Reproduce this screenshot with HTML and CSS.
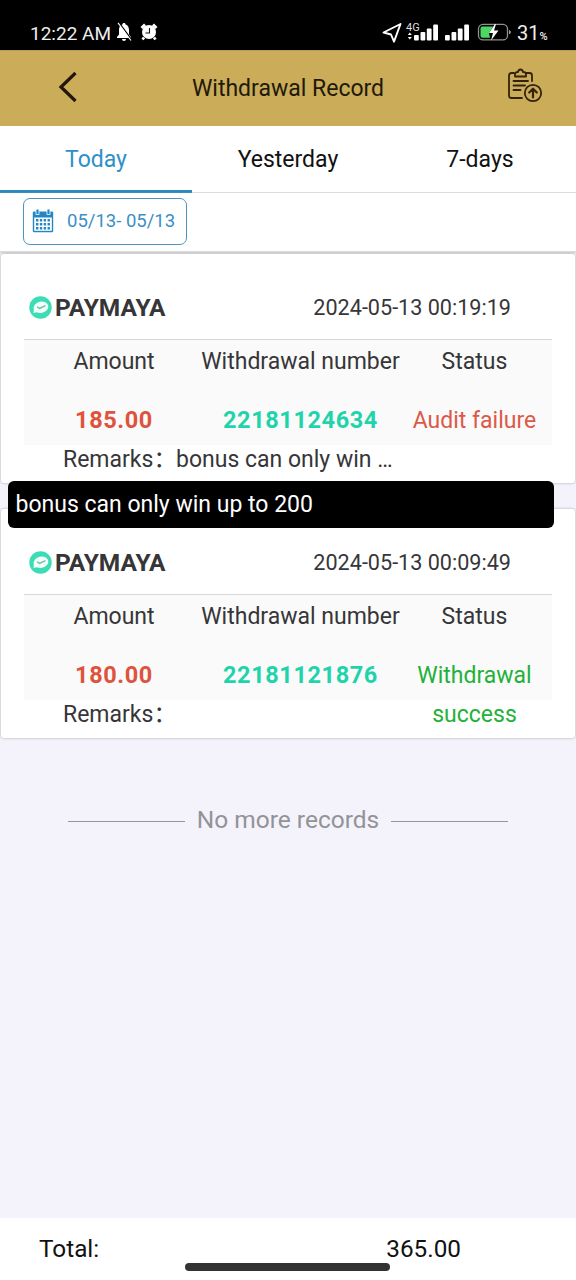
FILE: index.html
```html
<!DOCTYPE html>
<html lang="en">
<head>
<meta charset="utf-8">
<title>Withdrawal Record</title>
<link rel="stylesheet" href="styles.css">
</head>
<body>
<div class="statusbar">
  <div class="status-left">
    <span class="clock">12:22 AM</span>
    <svg class="bell" width="17" height="20" viewBox="0 0 17 20"><path d="M8 1c-1 0-1.600.6-1.600 1.500C3.800 3.200 3 5.500 3 8v4.500L1 15v1h14v-1l-2-2.500V8c0-2.500-1-4.800-3.400-5.500C9.600 1.600 9 1 8 1zM6 17a2 2 0 0 0 4 0z" fill="#fff"/><path d="M3 .8L16 18.500" stroke="#000" stroke-width="1.500"/><path d="M2 .8L15 18.500" stroke="#fff" stroke-width="1.100"/></svg>
    <svg class="alarm" width="18" height="18" viewBox="0 0 18 18"><path d="M1.500 5L5 1.500M16.500 5L13 1.500M4 14.500L2.500 16.500M14 14.500L15.500 16.500" stroke="#fff" stroke-width="2.800"/><circle cx="9" cy="9" r="7" fill="#fff"/><path d="M9.500 5v5H5.500" fill="none" stroke="#111" stroke-width="1.100"/></svg>
  </div>
  <div class="status-right">
    <svg width="132" height="24" viewBox="0 0 132 24">
      <path d="M18.500 3L1.500 11.500l7.500 2 3 7.200z" fill="none" stroke="#fff" stroke-width="1.900" stroke-linejoin="round"/>
      <path d="M25.800 14l2-2.500 2 2.500zM25.800 16l2 2.500 2-2.500z" fill="#fff"/>
      <g fill="#fff"><rect x="32" y="14" width="4.800" height="5.500" rx="1"/><rect x="38.500" y="11" width="4.800" height="8.500" rx="1"/><rect x="44.800" y="7.500" width="4.800" height="12" rx="1"/><rect x="51.200" y="3.500" width="4.800" height="16" rx="1"/>
      <rect x="63" y="14" width="4.800" height="5.500" rx="1"/><rect x="69.500" y="11" width="4.800" height="8.500" rx="1"/><rect x="75.800" y="7.500" width="4.800" height="12" rx="1"/><rect x="82.200" y="3.500" width="4.800" height="16" rx="1"/></g>
      <rect x="96.500" y="3.300" width="29" height="15.600" rx="4.500" fill="none" stroke="#8b938c" stroke-width="1.300"/>
      <path d="M100.500 5.500h10.500l-4 6.500 1 4.700h-7.500q-2 0-2-2v-7.200q0-2 2-2z" fill="#4bd763"/>
      <path d="M113 3l-6 9h4l-2 7.500 7.500-10h-4.500l2-6.500z" fill="#fff"/>
      <path d="M127.500 9.500q1.800 1.500 0 3.500z" fill="#999" stroke="#999"/>
      <text x="24" y="9.500" class="network">4G</text>
    </svg>
    <span class="battery">31<small>%</small></span>
  </div>
</div>

<header class="titlebar">
  <svg class="back" width="24" height="34" viewBox="0 0 24 34"><path d="M20.500 3L6 17 20.500 31" fill="none" stroke="#21170b" stroke-width="3.200"/></svg>
  <h1>Withdrawal Record</h1>
  <svg class="report" width="36" height="36" viewBox="0 0 36 36" fill="none" stroke="#33230c" stroke-width="1.800" stroke-linecap="round" stroke-linejoin="round">
    <path d="M7 5H4.500Q2 5 2 7.500v20Q2 30 4.500 30H15M19 5h3.500Q25 5 25 7.500V13"/>
    <path d="M8 8.500V6q0-2 3-2 .5-2.500 2.500-2.500T16 4q3 0 3 2v2.500z"/>
    <path d="M6.500 13H21M6.500 17.500H18M6.500 22H13.500"/>
    <circle cx="26" cy="25" r="8.200"/><path d="M26 29.500V21M22.200 24.500L26 20.700l3.800 3.800" stroke-width="2.200"/>
  </svg>
</header>

<nav class="tabs">
  <div class="tab active">Today</div>
  <div class="tab">Yesterday</div>
  <div class="tab">7-days</div>
</nav>

<div class="filter">
  <div class="range">
    <svg width="22" height="24" viewBox="0 0 22 24"><path d="M2 2.500h18q1.200 0 1.200 1.200V22q0 1.200-1.200 1.200H2Q.8 23.200.8 22V3.700Q.8 2.500 2 2.500z" fill="#2486c5"/><path d="M2.200 8.500h17.600v13.300H2.200z" fill="#fff"/><path d="M5.500.8v5M16.500.8v5" stroke="#fff" stroke-width="3.800"/><path d="M5.500.5v4.500M16.500.5v4.500" stroke="#2486c5" stroke-width="2.200"/><path d="M4 11.200h14M4 15.200h14M4 19.200h14" stroke="#2486c5" stroke-width="2.400" stroke-dasharray="2.400 1.450"/></svg>
    <span>05/13- 05/13</span>
  </div>
</div>

<main class="records">
  <section class="card">
    <div class="card-head">
      <svg class="logo" width="23" height="23" viewBox="0 0 23 23"><circle cx="11.500" cy="11.500" r="11.200" fill="#3cddb5"/><ellipse cx="12" cy="11.200" rx="7.400" ry="5.600" transform="rotate(-12 12 11.200)" fill="#f3fffb"/><path d="M5 12l-.5 5 4-1z" fill="#f3fffb"/><path d="M8 10.800l2.500 1.600 6-2.800" fill="none" stroke="#6abfa6" stroke-width="1.300"/></svg>
      <strong>PAYMAYA</strong>
      <time>2024-05-13 00:19:19</time>
    </div>
    <div class="details">
      <div class="label">Amount</div><div class="label">Withdrawal number</div><div class="label">Status</div>
      <div class="value amount">185.00</div><div class="value number">22181124634</div><div class="value failed">Audit failure</div>
    </div>
    <div class="remarks"><span class="remark-label">Remarks<b class="colon">：</b></span><span>bonus can only win …</span></div>
    <div class="toast">bonus can only win up to 200</div>
  </section>

  <section class="card">
    <div class="card-head">
      <svg class="logo" width="23" height="23" viewBox="0 0 23 23"><circle cx="11.500" cy="11.500" r="11.200" fill="#3cddb5"/><ellipse cx="12" cy="11.200" rx="7.400" ry="5.600" transform="rotate(-12 12 11.200)" fill="#f3fffb"/><path d="M5 12l-.5 5 4-1z" fill="#f3fffb"/><path d="M8 10.800l2.500 1.600 6-2.800" fill="none" stroke="#6abfa6" stroke-width="1.300"/></svg>
      <strong>PAYMAYA</strong>
      <time>2024-05-13 00:09:49</time>
    </div>
    <div class="details">
      <div class="label">Amount</div><div class="label">Withdrawal number</div><div class="label">Status</div>
      <div class="value amount">180.00</div><div class="value number">22181121876</div><div class="value success">Withdrawal success</div>
    </div>
    <div class="remarks"><span class="remark-label">Remarks<b class="colon">：</b></span></div>
  </section>
  <div class="end"><span>No more records</span></div>
</main>

<footer class="total">
  <span>Total:</span><span class="sum">365.00</span>
  <div class="home"></div>
</footer>
</body>
</html>
```
FILE: styles.css
```css
* { box-sizing: border-box; }
body {
  margin: 0;
  width: 576px;
  height: 1280px;
  display: flex;
  flex-direction: column;
  background: #f4f3fc;
  font-family: Roboto, "Noto Sans CJK SC", sans-serif;
  font-size: 23px;
  color: #363638;
  overflow: hidden;
}
svg { display: block; flex: none; }

.statusbar {
  height: 50px;
  padding: 17px 26px 0 30px;
  background: #000;
  color: #eee;
  display: flex;
  justify-content: space-between;
  line-height: 32px;
}
.status-left, .status-right { display: flex; height: 32px; }
.clock { font-size: 19px; width: 86px; line-height: 33px; white-space: nowrap; }
.bell { margin-top: 5px; }
.alarm { margin: 6px 0 0 7px; }
.status-right svg { margin-top: 4px; }
.network { font-size: 11px; fill: #ddd; }
.battery { font-size: 20px; width: 33px; margin-left: 3px; line-height: 33px; white-space: nowrap; }
.battery small { font-size: 11px; font-weight: 500; }

.titlebar {
  height: 76px;
  background: #cbac58;
  border-top: 1px solid #b99b58;
  display: grid;
  grid-template-columns: 80px 1fr 80px;
  align-items: center;
  padding-bottom: 3px;
  color: #21190c;
}
.back { margin-left: 55px; }
.titlebar h1 { margin: 2px 0 0; text-align: center; font-size: 23px; font-weight: 400; }
.report { margin: -2px 0 0 11px; }

.tabs { height: 67px; display: flex; background: #fff; border-bottom: 1px solid #ddd; }
.tab { flex: 1; height: 67px; line-height: 68px; text-align: center; color: #111; }
.tab.active { color: #2f8fc9; border-bottom: 3px solid #2d89bd; }

.filter {
  height: 59px;
  padding: 5px 0 0 23px;
  background: #fff;
  border-bottom: 1px solid #ddd;
  box-shadow: 0 1px 2px #ccc;
}
.range {
  width: 164px;
  height: 47px;
  border: 1px solid #4c94bf;
  border-radius: 7px;
  padding: 0 0 1px 8px;
  display: flex;
  align-items: center;
  gap: 13px;
  color: #3b8fc4;
  font-size: 18.500px;
  line-height: 24px;
  white-space: nowrap;
}

.records { flex: 1; padding-top: 2px; }
.card {
  position: relative;
  height: 229px;
  margin: 0 1px 26px;
  padding: 0 23px;
  background: #fff;
  border-radius: 3px;
  box-shadow: 0 0 3px rgba(0, 0, 0, .3);
}
.card-head {
  height: 86px;
  padding: 22px 41px 0 5px;
  border-bottom: 1px solid #d8d8d8;
  display: flex;
  align-items: center;
}
.card-head strong { margin-left: 3px; font-size: 24.500px; font-weight: 700; }
.card-head time { margin-left: auto; font-size: 21.600px; }
.details {
  height: 105px;
  display: grid;
  grid-template-columns: 180px 193px 155px;
  grid-template-rows: 61px 39px;
  background: #fafafa;
  text-align: center;
}
.label { line-height: 44px; margin: 0 -4px; white-space: nowrap; }
.value { line-height: 39px; }
.amount, .number { font-size: 23.500px; font-weight: 700; letter-spacing: .6px; }
.amount { color: #de533d; }
.number { color: #1fd3ab; }
.failed { color: #dc5947; }
.success { color: #23b13a; }
.remarks { display: flex; padding-left: 39px; line-height: 30px; white-space: nowrap; }
.remark-label { width: 113px; }
.colon { font-weight: 400; }
.toast {
  position: absolute;
  z-index: 2;
  left: 7px;
  top: 227px;
  width: 546px;
  height: 47px;
  padding-left: 7.500px;
  border-radius: 6px;
  background: #000;
  color: #fff;
  line-height: 47px;
}

.end {
  display: flex;
  align-items: center;
  gap: 12px;
  padding: 41px 68px 0;
  color: #939397;
  font-size: 24.500px;
  white-space: nowrap;
}
.end::before, .end::after { content: ""; flex: 1; height: 1px; margin-top: 3px; background: #96969a; }

.total {
  position: relative;
  height: 62px;
  padding: 0 115px 0 39px;
  display: flex;
  justify-content: space-between;
  background: #fff;
  color: #111;
  font-size: 24.300px;
  line-height: 62px;
}
.home {
  position: absolute;
  left: 185px;
  bottom: 9px;
  width: 205px;
  height: 8px;
  border-radius: 4px;
  background: #333;
}
```
